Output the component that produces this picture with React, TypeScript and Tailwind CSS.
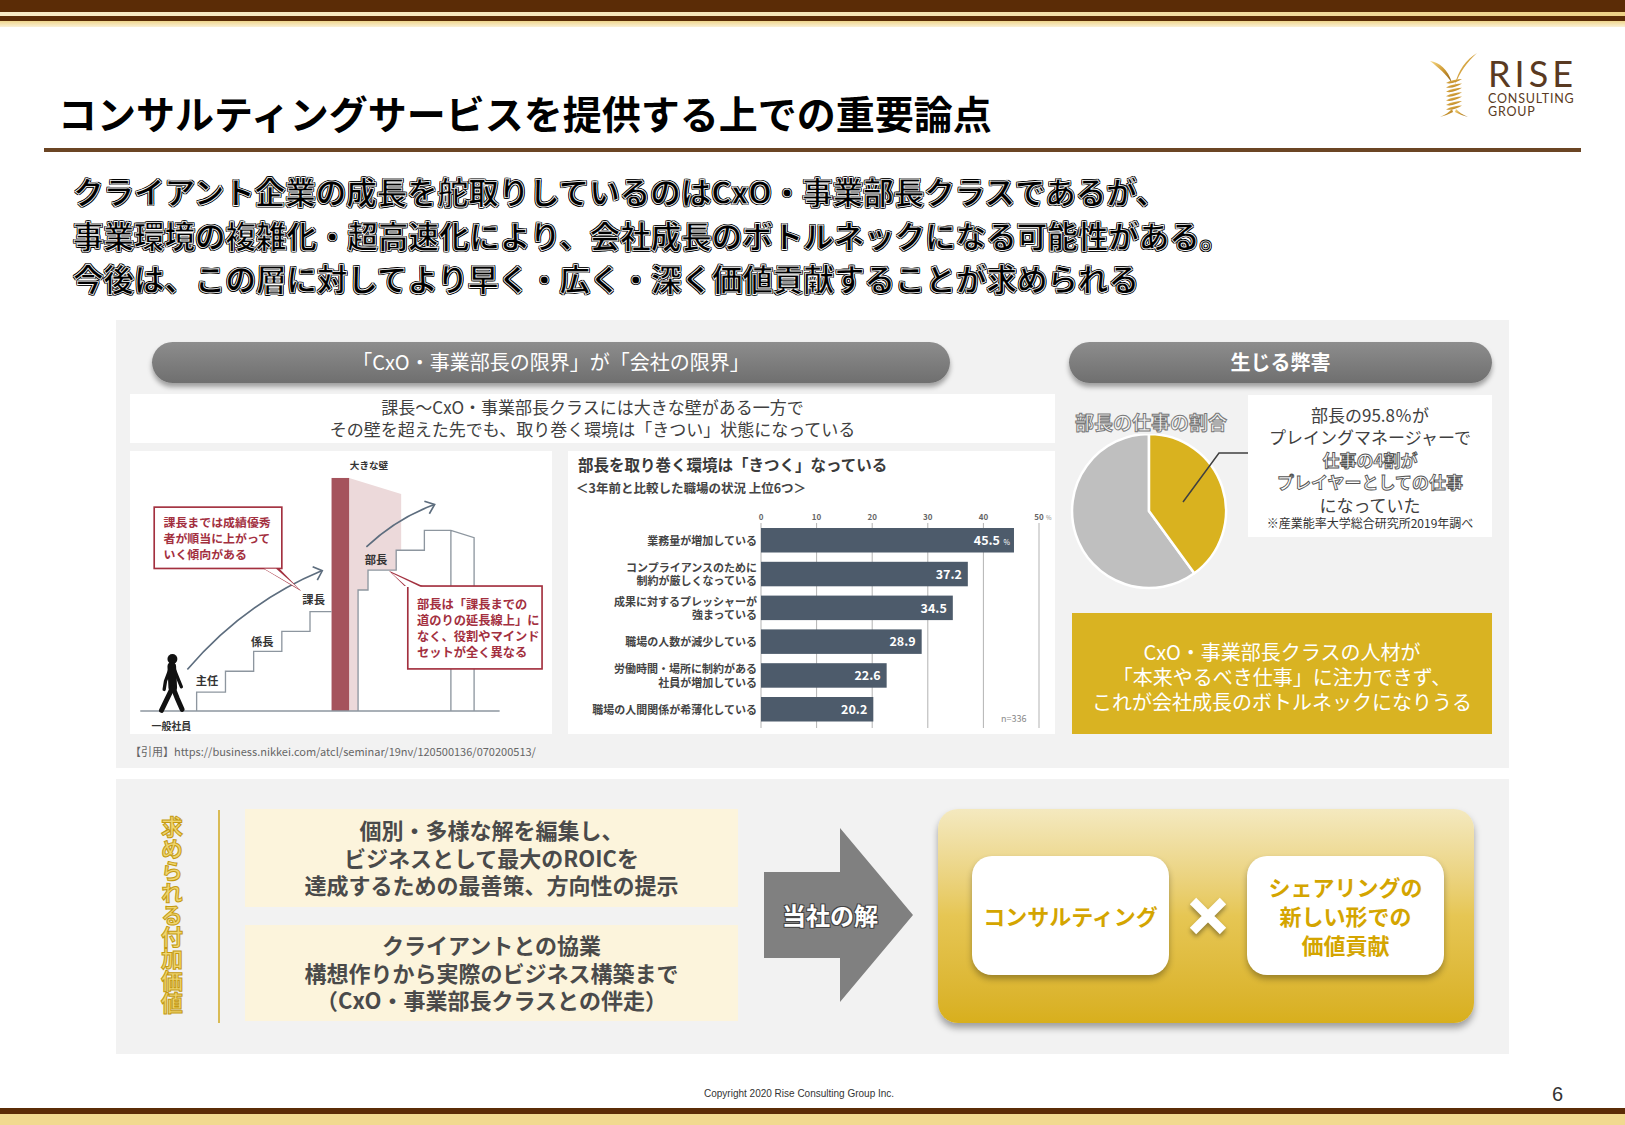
import React from "react";

const bars = [
  { label: ["業務量が増加している"], value: 45.5 },
  { label: ["コンプライアンスのために", "制約が厳しくなっている"], value: 37.2 },
  { label: ["成果に対するプレッシャーが", "強まっている"], value: 34.5 },
  { label: ["職場の人数が減少している"], value: 28.9 },
  { label: ["労働時間・場所に制約がある", "社員が増加している"], value: 22.6 },
  { label: ["職場の人間関係が希薄化している"], value: 20.2 },
];

function Logo() {
  return (
    <div className="flex items-start gap-[9px]">
      <svg width="50" height="66" viewBox="0 0 50 66">
        <defs>
          <linearGradient id="riseGold" x1="0" y1="0" x2="1" y2="1">
            <stop offset="0" stopColor="#f6d985" />
            <stop offset="0.5" stopColor="#cf9b35" />
            <stop offset="1" stopColor="#8c5c14" />
          </linearGradient>
        </defs>
        <path d="M1 9 C10 10 19 17 23 31 C17 22 10 16 1 9Z" fill="url(#riseGold)" />
        <path d="M48 1 C37 8 29 18 26 33 C31 20 38 10 48 1Z" fill="url(#riseGold)" />
        {[0, 1, 2, 3, 4, 5, 6].map((i) => (
          <path
            key={i}
            d={`M17 ${31 + i * 4.4} C22 ${28 + i * 4.4} 28 ${27 + i * 4.4} 33 ${27 + i * 4.4} C28 ${30 + i * 4.4} 22 ${32.5 + i * 4.4} 17 ${31 + i * 4.4}Z`}
            fill="url(#riseGold)"
          />
        ))}
        <path d="M24 60 C20 62 15 64 11 65 C16 63 20 60 23 57Z" fill="url(#riseGold)" />
        <path d="M26 60 C30 62 35 64 39 65 C34 63 30 60 27 57Z" fill="url(#riseGold)" />
      </svg>
      <div className="flex flex-col font-['Lato',sans-serif] text-[#5a3a22]">
        <span className="mt-[6px] text-[36px] leading-[30px] tracking-[4px]">RISE</span>
        <span className="mt-[4px] text-[12.5px] leading-[13px] tracking-[0.8px]">CONSULTING</span>
        <span className="text-[12.5px] leading-[13px] tracking-[0.8px]">GROUP</span>
      </div>
    </div>
  );
}

function Staircase() {
  const red = "#a3303f";
  const line = "#8d969f";
  const arrow = "#5d6d7e";
  return (
    <svg width="422" height="283" viewBox="57 363 1273 849" className="bg-white">
      <rect x="57" y="363" width="1273" height="849" fill="#fff" />
      <text x="720" y="416" fontSize="29" fontWeight="700" fill="#333">大きな壁</text>
      <polygon
        points="718,442 875,490 875,660 860,660 860,720 775,720 775,780 745,780 745,1145 718,1145"
        fill="#ecd9da"
      />
      <rect x="665" y="442" width="53" height="703" fill="#a5535c" />
      <path
        d="M258 1145 V1088 H345 V1025 H430 V965 H515 V905 H600 V845 H665"
        fill="none"
        stroke={line}
        strokeWidth="4"
      />
      <path
        d="M745 1145 V780 H775 V720 H860 V660 H945 V600 H1025 L1095 622 V1145 M1025 600 V1145"
        fill="none"
        stroke={line}
        strokeWidth="4"
      />
      <line x1="88" y1="1145" x2="1172" y2="1145" stroke={line} strokeWidth="4" />
      <circle cx="185" cy="988" r="15" fill="#111" />
      <path d="M183 1010 L186 1075" stroke="#111" strokeWidth="26" strokeLinecap="round" />
      <path d="M185 1075 L168 1110 L152 1143" stroke="#111" strokeWidth="15" strokeLinecap="round" fill="none" />
      <path d="M187 1075 L200 1108 L214 1140" stroke="#111" strokeWidth="15" strokeLinecap="round" fill="none" />
      <path d="M178 1018 L164 1055 L160 1080" stroke="#111" strokeWidth="10" strokeLinecap="round" fill="none" />
      <path d="M190 1018 L203 1050 L212 1072" stroke="#111" strokeWidth="10" strokeLinecap="round" fill="none" />
      <path d="M230 1020 Q400 820 635 722" fill="none" stroke={arrow} strokeWidth="5" />
      <path d="M608 710 L637 722 L622 750" fill="none" stroke={arrow} strokeWidth="5" />
      <path d="M770 650 Q860 565 975 522" fill="none" stroke={arrow} strokeWidth="5" />
      <path d="M945 512 L976 522 L960 550" fill="none" stroke={arrow} strokeWidth="5" />
      <text x="255" y="1066" fontSize="34" fontWeight="700" fill="#333">主任</text>
      <text x="422" y="948" fontSize="34" fontWeight="700" fill="#333">係長</text>
      <text x="577" y="822" fontSize="34" fontWeight="700" fill="#333">課長</text>
      <text x="765" y="702" fontSize="34" fontWeight="700" fill="#333">部長</text>
      <text x="122" y="1201" fontSize="30" fontWeight="700" fill="#333">一般社員</text>
      <polygon points="455,713 505,713 574,784" fill={red} />
      <rect x="130" y="530" width="385" height="185" fill="#fff" stroke={red} strokeWidth="5" />
      <polygon points="462,716 498,716 568,778" fill="#fff" />
      <g fontSize="36" fontWeight="700" fill={red}>
        <text x="158" y="589">課長までは成績優秀</text>
        <text x="158" y="638">者が順当に上がって</text>
        <text x="158" y="686">いく傾向がある</text>
      </g>
      <polygon points="885,768 940,768 838,722" fill={red} />
      <rect x="895" y="768" width="405" height="250" fill="#fff" stroke={red} strokeWidth="5" />
      <polygon points="893,771 934,771 846,729" fill="#fff" />
      <g fontSize="37" fontWeight="700" fill={red}>
        <text x="923" y="838">部長は「課長までの</text>
        <text x="923" y="886">道のりの延長線上」に</text>
        <text x="923" y="934">なく、役割やマインド</text>
        <text x="923" y="983">セットが全く異なる</text>
      </g>
    </svg>
  );
}

function BarChart() {
  const x0 = 193;
  const unit = 5.56;
  return (
    <svg width="487" height="283" viewBox="0 0 487 283">
      <rect width="487" height="283" fill="#fff" />
      <text x="10" y="20" fontSize="15.5" fontWeight="700" fill="#3a3a3a">
        部長を取り巻く環境は「きつく」なっている
      </text>
      <text x="8" y="42" fontSize="12.5" fontWeight="700" fill="#444">
        ＜3年前と比較した職場の状況 上位6つ＞
      </text>
      {[0, 10, 20, 30, 40, 50].map((t) => (
        <g key={t}>
          <line x1={x0 + t * unit} y1="72" x2={x0 + t * unit} y2="277" stroke="#b3b3b3" strokeWidth="1" />
          <text x={x0 + t * unit} y="69" fontSize="8" fontWeight="700" fill="#666" textAnchor="middle">
            {t}
          </text>
        </g>
      ))}
      <text x={x0 + 50 * unit + 7} y="69" fontSize="6" fill="#888">%</text>
      {bars.map((b, i) => {
        const y = 77 + i * 33.8;
        const w = b.value * unit;
        const cy = y + 12.5;
        return (
          <g key={b.value}>
            <rect x={x0} y={y} width={w} height="24.5" fill="#4d5b6b" />
            <text
              x={x0 + w - (i === 0 ? 14 : 6)}
              y={cy + 4.5}
              fontSize="12.5"
              fontWeight="700"
              fill="#fff"
              textAnchor="end"
            >
              {b.value.toFixed(1)}
            </text>
            {i === 0 && (
              <text x={x0 + w - 4} y={cy + 4} fontSize="7" fill="#fff" textAnchor="end">
                %
              </text>
            )}
            {b.label.length === 1 ? (
              <text x="189" y={cy + 4} fontSize="11" fontWeight="700" fill="#444" textAnchor="end">
                {b.label[0]}
              </text>
            ) : (
              <>
                <text x="189" y={cy - 2.5} fontSize="11" fontWeight="700" fill="#444" textAnchor="end">
                  {b.label[0]}
                </text>
                <text x="189" y={cy + 11} fontSize="11" fontWeight="700" fill="#444" textAnchor="end">
                  {b.label[1]}
                </text>
              </>
            )}
          </g>
        );
      })}
      <text x="433" y="271" fontSize="9" fill="#888">n=336</text>
    </svg>
  );
}

function Pie() {
  return (
    <svg width="179" height="156" viewBox="0 0 179 156">
      <path d="M80 77 L125.3 139.3 A77 77 0 1 1 80 0 Z" fill="#bfbfbf" stroke="#fff" strokeWidth="2.5" />
      <path d="M80 77 L80 0 A77 77 0 0 1 125.3 139.3 Z" fill="#d9b21f" stroke="#fff" strokeWidth="2.5" />
      <path d="M179 19 L150 19 L114 68" fill="none" stroke="#404040" strokeWidth="1.5" />
    </svg>
  );
}

export default function App() {
  return (
    <div className="relative flex h-[1125px] w-[1625px] flex-col overflow-hidden bg-white font-['Noto_Sans_CJK_JP',sans-serif]">
      <div className="h-[12px] bg-[#5b2c06]" />
      <div className="h-[4px] bg-gradient-to-r from-[#f8ebc6] via-[#f6e6b8] to-[#eed287]" />
      <div className="h-[5px] bg-[#5b2c06]" />
      <div className="h-[6px] bg-gradient-to-b from-[#efd68d] to-[#fbf1d6]" />

      <div className="flex items-start justify-between pl-[58px] pr-[48px]">
        <h1 className="mt-[66px] text-[39px] font-bold leading-none text-black">
          コンサルティングサービスを提供する上での重要論点
        </h1>
        <div className="mt-[25px]">
          <Logo />
        </div>
      </div>
      <div className="mx-[44px] mt-[16px] h-[4px] bg-[#6b4524]" />

      <div className="mt-[18px] pl-[73px] text-[30.5px] font-bold leading-[43.5px] text-black [-webkit-text-stroke:0.8px_#fff] [text-shadow:1px_1px_0_#000,-1px_-1px_0_#000,1px_-1px_0_#000,-1px_1px_0_#000,0_1px_0_#000,1px_0_0_#000,0_-1px_0_#000,-1px_0_0_#000]">
        <p>クライアント企業の成長を舵取りしているのはCxO・事業部長クラスであるが、</p>
        <p>事業環境の複雑化・超高速化により、会社成長のボトルネックになる可能性がある。</p>
        <p>今後は、この層に対してより早く・広く・深く価値貢献することが求められる</p>
      </div>

      <div className="ml-[116px] mt-[19px] flex h-[448px] w-[1393px] bg-[#f2f2f2] pl-[14px] pt-[22px]">
        <div className="w-[925px]">
          <div className="ml-[22px] flex h-[41px] w-[798px] items-center justify-center rounded-full bg-gradient-to-b from-[#8d8d8d] to-[#6f6f6f] text-[20px] text-white shadow-[0_4px_5px_rgba(0,0,0,0.35)]">
            「CxO・事業部長の限界」が「会社の限界」
          </div>
          <div className="mt-[11px] flex h-[49px] flex-col items-center justify-center bg-white text-[17px] leading-[22px] text-[#404040]">
            <p>課長〜CxO・事業部長クラスには大きな壁がある一方で</p>
            <p>その壁を超えた先でも、取り巻く環境は「きつい」状態になっている</p>
          </div>
          <div className="mt-[8px] flex h-[283px] gap-[16px]">
            <Staircase />
            <BarChart />
          </div>
          <p className="mt-[10px] text-[11px] leading-[14px] text-[#666]">
            【引用】https://business.nikkei.com/atcl/seminar/19nv/120500136/070200513/
          </p>
        </div>

        <div className="ml-[14px] w-[423px]">
          <div className="flex h-[41px] items-center justify-center rounded-full bg-gradient-to-b from-[#8d8d8d] to-[#6f6f6f] text-[20px] font-bold text-white shadow-[0_4px_5px_rgba(0,0,0,0.35)]">
            生じる弊害
          </div>
          <div className="mt-[12px] flex">
            <div className="w-[179px]">
              <p className="mt-[15px] pl-[6px] text-[19px] font-bold leading-[24px] text-[#f4f4f4] [-webkit-text-stroke:1px_#7a7a7a]">
                部長の仕事の割合
              </p>
              <Pie />
            </div>
            <div className="h-[142px] w-[244px] bg-white pt-[9px] text-center text-[17px] leading-[22.5px] text-[#404040]">
              <p>部長の95.8％が</p>
              <p>プレイングマネージャーで</p>
              <p className="font-bold text-white [-webkit-text-stroke:0.9px_#555]">仕事の4割が</p>
              <p className="font-bold text-white [-webkit-text-stroke:0.9px_#555]">プレイヤーとしての仕事</p>
              <p>になっていた</p>
              <p className="text-[12px] leading-[14px] text-[#333]">※産業能率大学総合研究所2019年調べ</p>
            </div>
          </div>
          <div className="ml-[3px] mt-[23px] flex h-[121px] w-[420px] flex-col items-center justify-center bg-[#d9b322] pt-[6px] text-[20px] leading-[25px] text-white">
            <p>CxO・事業部長クラスの人材が</p>
            <p>「本来やるべき仕事」に注力できず、</p>
            <p>これが会社成長のボトルネックになりうる</p>
          </div>
        </div>
      </div>

      <div className="ml-[116px] mt-[11px] flex h-[275px] w-[1393px] items-start bg-[#f2f2f2] pl-[44px]">
        <p className="mt-[37px] w-[23px] text-[22px] font-bold leading-[23px] text-[#f0d56e] [-webkit-text-stroke:1px_#c49a10] [writing-mode:vertical-rl]">
          求められる付加価値
        </p>
        <div className="ml-[35px] mt-[31px] h-[213px] w-[2px] bg-[#d9bb55]" />
        <div className="ml-[25px] mt-[30px] flex w-[493px] flex-col gap-[18px] text-center text-[22px] font-bold leading-[27.5px] text-[#4a4a4a]">
          <div className="flex h-[98px] flex-col items-center justify-center bg-[#fcf4dc]">
            <p>個別・多様な解を編集し、</p>
            <p>ビジネスとして最大のROICを</p>
            <p>達成するための最善策、方向性の提示</p>
          </div>
          <div className="flex h-[96px] flex-col items-center justify-center bg-[#fcf4dc]">
            <p>クライアントとの協業</p>
            <p>構想作りから実際のビジネス構築まで</p>
            <p>（CxO・事業部長クラスとの伴走）</p>
          </div>
        </div>
        <div className="relative ml-[26px] mt-[49px] flex h-[174px] w-[149px] items-center">
          <svg width="149" height="174" viewBox="0 0 149 174" className="absolute inset-0">
            <polygon points="0,44 76,44 76,0 149,87 76,174 76,130 0,130" fill="#808080" />
          </svg>
          <span className="relative ml-[18px] text-[24px] font-bold text-white [text-shadow:1px_1px_0_#444,-1px_-1px_0_#444,1px_-1px_0_#444,-1px_1px_0_#444]">
            当社の解
          </span>
        </div>
        <div className="ml-[25px] mt-[30px] flex h-[214px] w-[536px] items-center rounded-[20px] bg-gradient-to-b from-[#f4e9bf] via-[#e6c653] to-[#d8af1c] pl-[34px] shadow-[0_5px_7px_rgba(0,0,0,0.35)]">
          <div className="flex h-[119px] w-[197px] items-center justify-center rounded-[20px] bg-white text-[22px] font-bold text-[#d4a500] shadow-[0_4px_6px_rgba(0,0,0,0.3)]">
            コンサルティング
          </div>
          <div className="flex w-[78px] justify-center">
            <svg width="40" height="40" viewBox="0 0 40 40" className="drop-shadow-[0_3px_2px_rgba(0,0,0,0.35)]">
              <path d="M5 5 L35 35 M35 5 L5 35" stroke="#fff" strokeWidth="9" />
            </svg>
          </div>
          <div className="flex h-[119px] w-[197px] flex-col items-center justify-center rounded-[20px] bg-white text-[22px] font-bold leading-[29px] text-[#d4a500] shadow-[0_4px_6px_rgba(0,0,0,0.3)]">
            <p>シェアリングの</p>
            <p>新しい形での</p>
            <p>価値貢献</p>
          </div>
        </div>
      </div>

      <div className="mt-[26px] flex h-[28px] items-center">
        <span className="pl-[704px] font-['Liberation_Sans',sans-serif] text-[10px] text-[#333]">
          Copyright 2020 Rise Consulting Group Inc.
        </span>
        <span className="ml-auto mr-[62px] font-['Liberation_Sans',sans-serif] text-[20px] text-[#333]">6</span>
      </div>
      <div className="mt-auto h-[6px] bg-[#5b2c06]" />
      <div className="h-[11px] bg-[#f1d98f]" />
    </div>
  );
}
